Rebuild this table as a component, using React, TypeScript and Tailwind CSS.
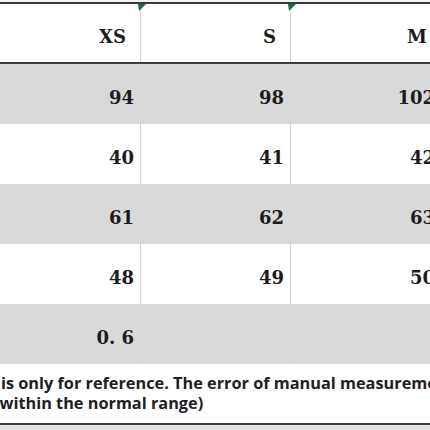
const rows = [
  { cells: ["94", "98", "102"], shade: true },
  { cells: ["40", "41", "42"], shade: false },
  { cells: ["61", "62", "63"], shade: true },
  { cells: ["48", "49", "50"], shade: false },
  { cells: ["0. 6", "", ""], shade: true },
];

const sizes = ["XS", "S", "M"];

const Flag = () => (
  <svg
    className="absolute -left-[3px] top-0"
    width="8"
    height="7"
    viewBox="0 0 8 7"
  >
    <path d="M0 0 H8 L1 7 Z" fill="#1f6b3a" />
  </svg>
);

export default function App() {
  return (
    <div className="w-[430px] h-[430px] overflow-hidden bg-white font-['DejaVu_Serif',serif]">
      <div className="h-[2px] bg-[#f4f4f4]" />
      <div className="border-t-2 border-[#3a3a3a]">
        <div className="grid grid-cols-[141px_150px_150px] h-[58px] bg-white">
          {sizes.map((s, i) => (
            <div
              key={s}
              className={`relative flex items-center justify-end pr-[14px] pt-[6px] text-[18px] font-bold text-[#1c1c1c] ${
                i < 2 ? "border-r border-[#d2d2d2]" : ""
              }`}
            >
              {i > 0 && <Flag />}
              {s}
            </div>
          ))}
        </div>
        <div className="h-[2px] bg-[#3c3c3c]" />
        {rows.map((r, ri) => (
          <div
            key={ri}
            className={`grid grid-cols-[141px_150px_150px] h-[60px] ${
              r.shade ? "bg-[#d9d9d9]" : "bg-white"
            }`}
          >
            {r.cells.map((c, ci) => (
              <div
                key={ci}
                className={`flex items-center justify-end pr-[6px] pt-[6px] text-[18px] font-bold text-[#1c1c1c] ${
                  ci < 2 ? (r.shade ? "border-r border-[#d6d6d6]" : "border-r border-[#d2d2d2]") : ""
                }`}
              >
                {c}
              </div>
            ))}
          </div>
        ))}
      </div>
      <div className="h-[59px] pt-[9px] pl-[1px] font-['Open_Sans',sans-serif] font-bold text-[16.3px] leading-[20px] text-[#221d26] whitespace-nowrap">
        <div>is only for reference. The error of manual measurement 1-3cm is</div>
        <div className="-ml-[7px]">(within the normal range)</div>
      </div>
      <div className="h-[2px] bg-[#3e3e3e]" />
      <div className="h-[10px] bg-[#e4e4e4]" />
    </div>
  );
}
